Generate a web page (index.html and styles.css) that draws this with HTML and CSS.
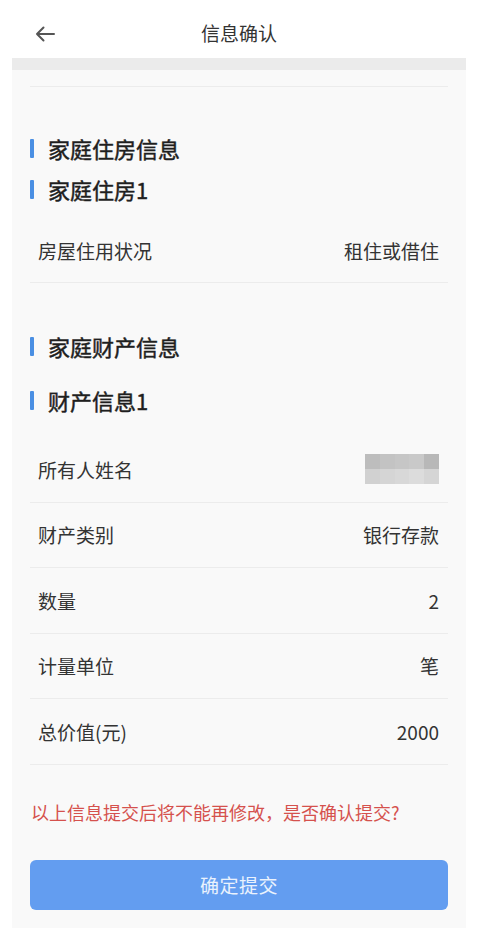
FILE: index.html
```html
<!DOCTYPE html>
<html lang="zh">
<head>
<meta charset="utf-8">
<title>信息确认</title>
<link rel="stylesheet" href="styles.css">
</head>
<body>
<div class="page">
  <header class="topbar">
    <svg class="back" viewBox="0 0 20 16" width="20" height="16"><path d="M19 8H2M8.5 1.5L2 8l6.5 6.5" fill="none" stroke="#555" stroke-width="2" stroke-linecap="round" stroke-linejoin="round"/></svg>
    <div class="title">信息确认</div>
  </header>
  <main class="card">
    <div class="lead"></div>

    <h2 class="heading sec-first">家庭住房信息</h2>
    <h3 class="heading sub sub-tight">家庭住房1</h3>
    <div class="row"><span class="label">房屋住用状况</span><span class="value">租住或借住</span></div>

    <h2 class="heading sec">家庭财产信息</h2>
    <h3 class="heading sub sub-loose">财产信息1</h3>
    <div class="rows">
      <div class="row row-f"><span class="label">所有人姓名</span>
        <span class="blur">
          <i style="background:#bdbdbd"></i><i style="background:#c3c3c3"></i><i style="background:#c6c6c6"></i><i style="background:#c9c9c9"></i><i style="background:#b8b8b8"></i>
          <i style="background:#d1d1d1"></i><i style="background:#d5d5d5"></i><i style="background:#d8d8d8"></i><i style="background:#dcdcdc"></i><i style="background:#d5d5d5"></i>
        </span>
      </div>
      <div class="row row-f"><span class="label">财产类别</span><span class="value">银行存款</span></div>
      <div class="row row-f"><span class="label">数量</span><span class="value">2</span></div>
      <div class="row row-f"><span class="label">计量单位</span><span class="value">笔</span></div>
      <div class="row row-f"><span class="label">总价值(元)</span><span class="value">2000</span></div>
    </div>

    <p class="warn">以上信息提交后将不能再修改，是否确认提交?</p>
    <button class="submit">确定提交</button>
  </main>
</div>
</body>
</html>
```

FILE: styles.css
```css
* { box-sizing: border-box; }
html, body { margin: 0; padding: 0; background: #ffffff; }
body {
  font-family: "Noto Sans CJK SC", "Noto Sans", sans-serif;
  color: #333;
}
.page { width: 500px; }

.topbar {
  width: 478px;
  height: 58px;
  padding-top: 8px;
  display: flex;
  align-items: center;
  justify-content: center;
  position: relative;
}
.back {
  position: absolute;
  left: 35px;
  top: 26px;
}
.title {
  font-size: 19px;
  color: #333;
  line-height: 24px;
}

.card {
  width: 454px;
  margin-left: 12px;
  background: #f9f9f9;
  border-top: 12px solid #ebebeb;
  padding: 0 18px 18px;
}
.lead {
  height: 17px;
  border-bottom: 1px solid #ececec;
}

.heading {
  margin: 0;
  display: flex;
  align-items: center;
  height: 30px;
  font-size: 22px;
  font-weight: 400;
  -webkit-text-stroke: 0.45px #1f1f1f;
  color: #1f1f1f;
  line-height: 30px;
}
.heading::before {
  content: "";
  width: 4px;
  height: 19px;
  border-radius: 1px;
  background: #4a8fe3;
  margin-right: 14px;
}
.sec-first { margin-top: 46px; }
.sec { margin-top: 48px; }
.sub-tight { margin-top: 11px; margin-bottom: 14px; }
.sub-loose { margin-top: 24px; margin-bottom: 22px; }

.row {
  height: 65px;
  display: flex;
  align-items: center;
  justify-content: space-between;
  padding: 0 9px 0 8px;
  border-bottom: 1px solid #ececec;
  font-size: 19px;
  color: #333;
}
.row-f { height: 65.5px; }

.blur {
  width: 74px;
  height: 30px;
  display: grid;
  grid-template-columns: repeat(5, 1fr);
  grid-template-rows: 1fr 1fr;
}
.blur i { display: block; }

.warn {
  margin: 35px 0 0 1px;
  font-size: 18px;
  line-height: 24px;
  color: #d5514d;
}
.submit {
  display: block;
  width: 100%;
  height: 50px;
  margin-top: 36px;
  border: none;
  border-radius: 6px;
  background: #639df0;
  color: #eaf2fd;
  font-family: inherit;
  font-size: 19px;
  letter-spacing: 0.5px;
}
```
